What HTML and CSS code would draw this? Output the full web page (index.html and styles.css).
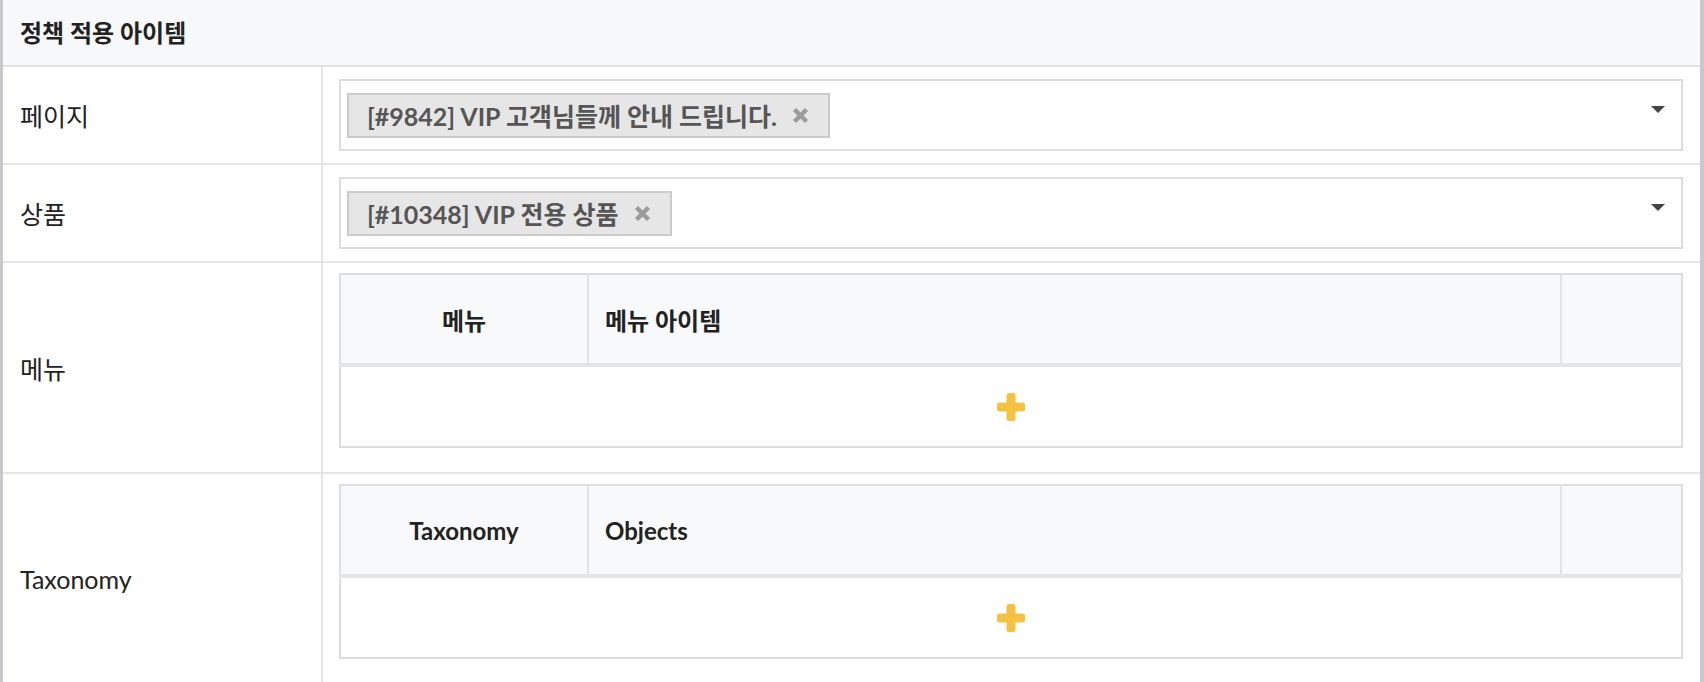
FILE: index.html
```html
<!DOCTYPE html>
<html lang="ko">
<head>
<meta charset="UTF-8">
<title>정책 적용 아이템</title>
<link rel="stylesheet" href="styles.css">
</head>
<body>

<div class="panel">
	<div class="panel-head">정책 적용 아이템</div>

	<!-- page -->
	<div class="field-row">
		<div class="field-label">페이지</div>
		<div class="field-value">
			<div class="select-box">
				<span class="tag">[#9842] VIP 고객님들께 안내 드립니다.
					<svg class="tag-remove" width="17" height="17" viewBox="0 0 17 17"><path d="M2.5 2.5 L14.5 14.5 M14.5 2.5 L2.5 14.5"/></svg>
				</span>
				<span class="caret"></span>
			</div>
		</div>
	</div>

	<!-- product -->
	<div class="field-row">
		<div class="field-label">상품</div>
		<div class="field-value">
			<div class="select-box">
				<span class="tag">[#10348] VIP 전용 상품
					<svg class="tag-remove" width="17" height="17" viewBox="0 0 17 17"><path d="M2.5 2.5 L14.5 14.5 M14.5 2.5 L2.5 14.5"/></svg>
				</span>
				<span class="caret"></span>
			</div>
		</div>
	</div>

	<!-- menu -->
	<div class="field-row">
		<div class="field-label">메뉴</div>
		<div class="field-value table-value">
			<table class="sub-table">
				<thead>
					<tr>
						<th class="col-first">메뉴</th>
						<th class="col-main">메뉴 아이템</th>
						<th class="col-last"></th>
					</tr>
				</thead>
				<tbody>
					<tr>
						<td colspan="3" class="add-cell">
							<svg class="add-icon" width="28" height="28" viewBox="0 0 28 28"><rect x="9.5" y="0" width="9" height="28" rx="2.5"/><rect x="0" y="9.5" width="28" height="9" rx="2.5"/></svg>
						</td>
					</tr>
				</tbody>
			</table>
		</div>
	</div>

	<!-- taxonomy -->
	<div class="field-row">
		<div class="field-label">Taxonomy</div>
		<div class="field-value table-value">
			<table class="sub-table">
				<thead>
					<tr>
						<th class="col-first">Taxonomy</th>
						<th class="col-main">Objects</th>
						<th class="col-last"></th>
					</tr>
				</thead>
				<tbody>
					<tr>
						<td colspan="3" class="add-cell">
							<svg class="add-icon" width="28" height="28" viewBox="0 0 28 28"><rect x="9.5" y="0" width="9" height="28" rx="2.5"/><rect x="0" y="9.5" width="28" height="9" rx="2.5"/></svg>
						</td>
					</tr>
				</tbody>
			</table>
		</div>
	</div>
</div>

</body>
</html>
```

FILE: styles.css
```css
body
{
margin: 0;
background-color: #fff;
font-family: Lato, "Noto Sans CJK KR", sans-serif;
color: #222;
}

.panel
{
border-left: 3px solid #c9c9cd;
border-right: 4px solid #c9c9cd;
}

.panel-head
{
height: 65px;
line-height: 65px;
padding-left: 17px;
background-color: #f7f8fa;
border-bottom: 2px solid #e3e3e5;
font-size: 24px;
font-weight: bold;
}

.field-row
{
display: grid;
grid-template-columns: 320px 1fr;
border-bottom: 2px solid #e6e6e8;
}

.field-label
{
display: flex;
align-items: center;
padding-left: 17px;
border-right: 2px solid #e6e6e8;
font-size: 25px;
}

.field-value
{
padding: 12px 17px 12px 16px;
}

.table-value
{
padding-top: 10px;
}

.select-box
{
display: flex;
align-items: center;
height: 68px;
padding: 0 16px 0 6px;
border: 2px solid #dedede;
}

.tag
{
display: flex;
align-items: center;
gap: 15px;
height: 41px;
padding: 0 19px 0 18px;
background-color: #e6e6e6;
border: 2px solid #cbcbcb;
color: #555;
font-size: 25px;
font-weight: bold;
}

.tag-remove
{
stroke: #9b9b9b;
stroke-width: 4.5;
}

.caret
{
align-self: flex-start;
margin: 25px 0 0 auto;
border-left: 7px solid transparent;
border-right: 7px solid transparent;
border-top: 7px solid #444;
}

.field-row .sub-table
{
width: 100%;
margin-bottom: 12px;
border-collapse: collapse;
table-layout: fixed;
border: 2px solid #dddddd;
}

.sub-table th
{
height: 88px;
padding: 0 16px;
background-color: #f8f9fa;
border-bottom: 4px solid #e4e5e7;
font-size: 24px;
font-weight: bold;
text-align: left;
}

.sub-table th + th
{
border-left: 2px solid #e3e3e5;
}

.sub-table .col-first
{
width: 214px;
text-align: center;
}

.sub-table .col-last
{
width: 87px;
}

.add-cell
{
height: 79px;
padding: 0;
text-align: center;
vertical-align: middle;
}

.add-icon
{
display: block;
margin: 0 auto;
fill: #f4c142;
}
```
